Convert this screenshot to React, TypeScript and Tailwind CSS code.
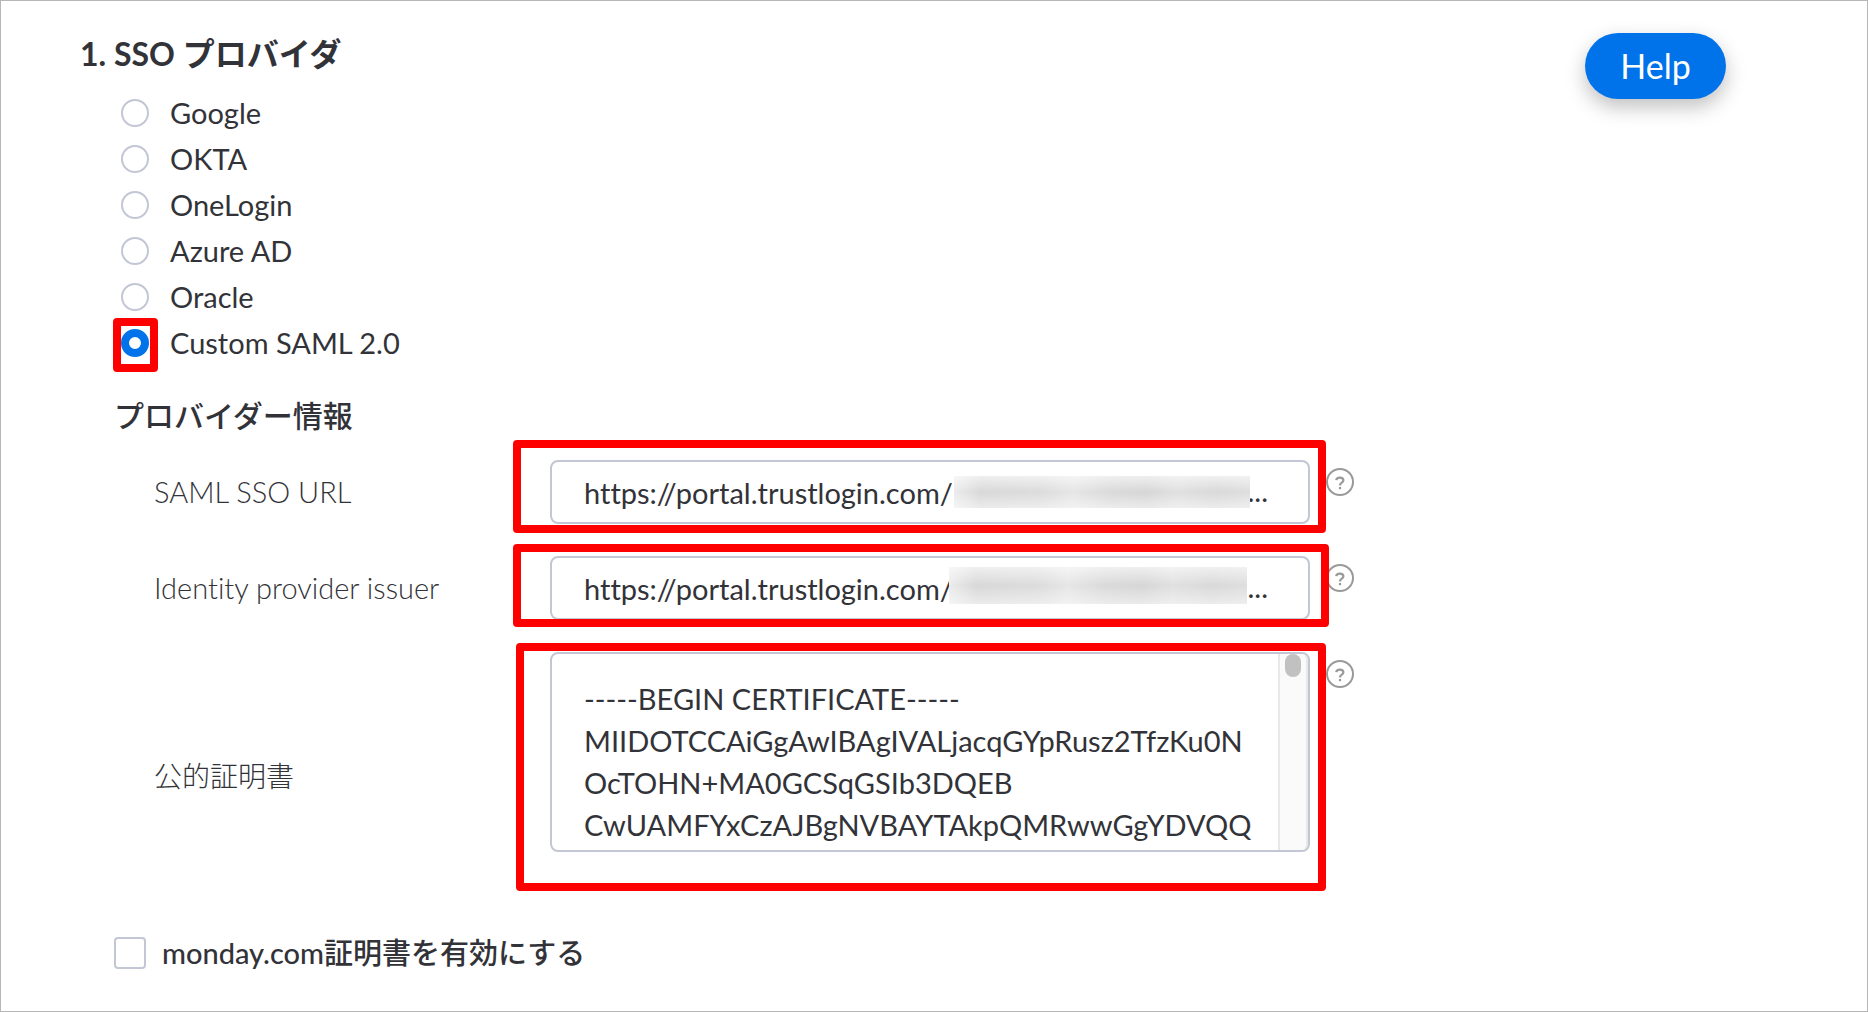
import React, { useState } from 'react';

const providers = ['Google', 'OKTA', 'OneLogin', 'Azure AD', 'Oracle', 'Custom SAML 2.0'];

const urlFields = [
    {
        id: 'sso-url',
        label: 'SAML SSO URL',
        value: 'https://portal.trustlogin.com/',
        frame: 'absolute pointer-events-none border-8 border-[#ff0000] rounded -left-[37px] -right-4 -top-5 -bottom-[9px]',
        mask: 'absolute top-4 left-[404px] right-[60px] h-8',
    },
    {
        id: 'issuer',
        label: 'Identity provider issuer',
        value: 'https://portal.trustlogin.com/',
        frame: 'absolute pointer-events-none border-8 border-[#ff0000] rounded -left-[37px] -right-[19px] -top-3 -bottom-[7px]',
        mask: 'absolute top-[11px] left-[399px] right-[63px] h-[37px]',
    },
];

const certificate = [
    '-----BEGIN CERTIFICATE-----',
    'MIIDOTCCAiGgAwIBAgIVALjacqGYpRusz2TfzKu0N',
    'OcTOHN+MA0GCSqGSIb3DQEB',
    'CwUAMFYxCzAJBgNVBAYTAkpQMRwwGgYDVQQ',
].join('\n');

const HelpIcon = ({ label }: { label: string }) => (
    <button
        type="button"
        aria-label={label + ' help'}
        className="ml-4 mt-2 size-7 shrink-0 rounded-full border-2 border-[#999999] text-[#999999] flex items-center justify-center"
    >
        <svg viewBox="0 0 24 24" className="size-6" fill="none" stroke="currentColor" strokeWidth="2.2">
            <path d="M8.2 10.2c.2-1.7 1.6-2.6 3.5-2.6 2.2 0 3.7 1 3.7 2.7 0 1.4-.9 2-1.9 2.6-1 .6-1.5 1-1.5 2.5" />
            <path d="M12 17v2.2" />
        </svg>
    </button>
);

const App = () => {
    const [selected, setSelected] = useState('Custom SAML 2.0');
    const [enabled, setEnabled] = useState(false);

    return (
        <main className="min-h-screen bg-white border border-[#b7b7b7] pl-[79px] pt-8 pr-[141px] pb-8 text-[#323338] text-[29px] leading-[42px] font-['Lato','Noto_Sans_CJK_JP',sans-serif] [font-variant-ligatures:none]">
            <div className="flex items-start justify-between">
                <section>
                    <h2 className="text-[32px] leading-[42px] font-bold">1. SSO プロバイダ</h2>

                    {/* Provider list */}
                    <div className="pl-[41px] mt-[15px]">
                        {providers.map((name) => (
                            <label key={name} className="flex items-center h-[46px] w-fit cursor-pointer">
                                <span className="relative flex mr-[21px]">
                                    <input
                                        type="radio"
                                        name="provider"
                                        checked={selected === name}
                                        onChange={() => setSelected(name)}
                                        className="appearance-none size-7 rounded-full border-2 border-[#c3c6d4] checked:border-8 checked:border-[#0073ea]"
                                    />
                                    {name === 'Custom SAML 2.0' && (
                                        <span className="absolute pointer-events-none border-8 border-[#ff0000] rounded -left-2 -right-[9px] -top-[11px] -bottom-[15px]" />
                                    )}
                                </span>
                                {name}
                            </label>
                        ))}
                    </div>
                </section>

                <button
                    type="button"
                    className="w-[141px] h-[66px] rounded-full bg-[#0073ea] text-white text-[34px] shadow-[0_8px_20px_rgba(0,0,0,0.25)]"
                >
                    Help
                </button>
            </div>

            {/* Provider details */}
            <section>
                <h3 className="text-[30px] leading-[42px] font-medium pl-[34px] mt-7">プロバイダー情報</h3>
                <div className="pl-[74px] mt-6 flex flex-col gap-8">
                    {urlFields.map((field) => (
                        <div key={field.id} className="flex items-start">
                            <label htmlFor={field.id} className="w-[396px] shrink-0 leading-[64px] font-light">{field.label}</label>
                            <div className="relative w-full max-w-[760px]">
                                <input
                                    id={field.id}
                                    type="text"
                                    defaultValue={field.value}
                                    className="block w-full h-16 px-8 rounded-lg border-2 border-[#c3c6d4]"
                                />
                                <span className="absolute right-[42px] top-2.5 pointer-events-none">...</span>
                                <div className={field.mask + ' bg-[linear-gradient(to_bottom,rgba(255,255,255,0.6),rgba(255,255,255,0)_50%,rgba(255,255,255,0.5)),linear-gradient(to_right,#ececec,#d8d8d8_9%,#dcdcdc_30%,#e6e6e6_40%,#dadada_52%,#d6d6d6_65%,#e0e0e0_75%,#d9d9d9_88%,#dedede)]'} />
                                <div className={field.frame} />
                            </div>
                            <HelpIcon label={field.label} />
                        </div>
                    ))}

                    <div className="flex items-start">
                        <label htmlFor="certificate" className="w-[396px] shrink-0 text-[28px] font-light self-center pt-12">公的証明書</label>
                        <div className="relative w-full max-w-[760px]">
                            <textarea
                                id="certificate"
                                defaultValue={certificate}
                                wrap="off"
                                className="block w-full h-[200px] px-8 pt-6 resize-none overflow-hidden rounded-lg border-2 border-[#c3c6d4]"
                            />
                            {/* Scroll track */}
                            <div className="absolute top-0.5 right-0.5 bottom-0.5 w-[30px] border-x-2 border-[#e8e8e8] bg-[#fafafa] rounded-r-md flex justify-center">
                                <div className="w-4 h-[23px] rounded-full bg-[#c1c1c1]" />
                            </div>
                            <div className="absolute pointer-events-none border-8 border-[#ff0000] rounded -left-[34px] -right-4 -top-[9px] -bottom-[39px]" />
                        </div>
                        <HelpIcon label="公的証明書" />
                    </div>
                </div>
            </section>

            <label className="ml-[34px] mt-20 flex items-center w-fit font-medium cursor-pointer">
                <input
                    type="checkbox"
                    checked={enabled}
                    onChange={(e) => setEnabled(e.target.checked)}
                    className="appearance-none size-8 mr-4 rounded border-2 border-[#c3c6d4] checked:bg-[#0073ea]"
                />
                monday.com証明書を有効にする
            </label>
        </main>
    );
};

export default App;
